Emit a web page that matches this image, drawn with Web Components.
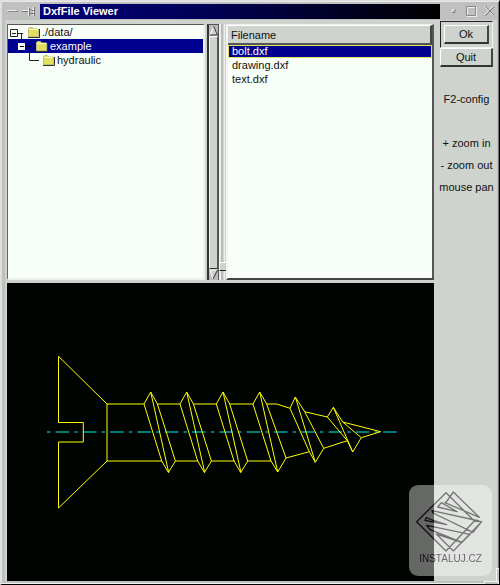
<!DOCTYPE html>
<html lang="en">
<head>
<meta charset="utf-8">
<title>DxfFile Viewer</title>
<style>
html,body{margin:0;background:#000}
body{font:11px/14px "Liberation Sans",Arial,sans-serif;color:#111;--face:#ced3ce;--frame:#c0c0c0;--paper:#f8fff8;--navy:#000090}
</style>
</head>
<body>
<dxf-window>
  <title-bar slot="title">DxfFile Viewer</title-bar>
  <dir-tree slot="tree"></dir-tree>
  <scroll-bar slot="scroll"></scroll-bar>
  <pane-splitter slot="split"></pane-splitter>
  <file-list slot="files"></file-list>
  <bolt-drawing slot="drawing"></bolt-drawing>
  <side-panel slot="side"></side-panel>
  <site-mark slot="mark">INSTALUJ.CZ</site-mark>
</dxf-window>
<script>
const define = (name, html) => customElements.define(name, class extends HTMLElement {
  constructor() {
    super();
    this.attachShadow({mode: 'open'}).innerHTML = html;
  }
});

define('dxf-window', `
<style>
:host{display:flex;flex-direction:column;box-sizing:border-box;min-height:100vh;position:relative;background:var(--frame);
 border:solid;border-width:1px 1px 1px 2px;border-color:#e0e0e0 #000 #000 #dde0dd;box-shadow:inset 0 1px #e8e8e8,inset -1px 0 #777,inset 0 -1px #eee;padding:3px 2px 3px 3px}
.client{display:flex;flex:1;background:var(--face);padding-left:2px}
.main{flex:1;min-width:0;display:flex;flex-direction:column;gap:3px;padding-top:4px}
.panes{display:grid;grid-template-columns:minmax(0,200fr) 12px 7px minmax(0,208fr);height:256px}
.tree{display:grid;padding-right:2px}
.grip{position:absolute;right:0;bottom:0;width:15px;height:16px;cursor:nwse-resize}
.grip::before,.grip::after{content:"";position:absolute;right:0;bottom:0;box-sizing:border-box;background:#c0c0c0;border:1px solid #f4f4f4}
.grip::before{width:3px;height:16px;border-right:0}
.grip::after{width:15px;height:3px;border-bottom:0}
</style>
<slot name="title"></slot>
<div class="client">
  <div class="main">
    <div class="panes"><div class="tree"><slot name="tree"></slot></div><slot name="scroll"></slot><slot name="split"></slot><slot name="files"></slot></div>
    <slot name="drawing"></slot>
  </div>
  <slot name="side"></slot>
</div>
<slot name="mark"></slot>
<div class="grip"></div>`);

define('title-bar', `
<style>
:host{display:flex;align-items:flex-start;height:16px}
.left,.right{display:flex;flex:none}
.left{width:35px}
.right{width:57px;justify-content:flex-end}
h1{flex:1;margin:0;height:15px;padding-left:3px;font:bold 11px/14px "Liberation Sans",Arial,sans-serif;color:#fff;background:linear-gradient(90deg,#000078,#000058 40%,#000)}
button{all:unset;display:block;height:15px;cursor:pointer}
svg{display:block}
</style>
<div class="left">
<button aria-label="Window menu"><svg width="15" height="15"><path d="M2 6.500h10" stroke="#eee"/><path d="M3 7.500h10M12.500 6v2" stroke="#888"/></svg></button>
<button aria-label="Pin window"><svg width="18" height="15" fill="none"><path d="M2 6.500h6M8.500 3v9M9 5.500h4M13.500 3v9" stroke="#eee"/><path d="M2 7.500h6M9.500 4v8M10 9.500h4M10 5l2 1.500h2M14.500 3v9" stroke="#777"/></svg></button>
</div>
<h1><slot></slot></h1>
<div class="right">
<button aria-label="Iconify"><svg width="16" height="15"><path d="M6 8V5.500h3" fill="none" stroke="#eee"/><path d="M9 5v3.500H6" fill="none" stroke="#888"/></svg></button>
<button aria-label="Maximize"><svg width="18" height="15" fill="none"><path d="M5.500 11V3.500h7" stroke="#f0f0f0"/><path d="M4.500 11.500V2.500h9v9z" stroke="#888"/><path d="M14.500 3v9.500H5" stroke="#eee"/></svg></button>
<button aria-label="Close"><svg width="17" height="15"><path d="M4 2l9 9M4 11l9-9" stroke="#eee"/><path d="M5 2l9 9M5 12l9-9" stroke="#777"/></svg></button>
</div>`);

const folder = `<svg class="folder" width="13" height="12" viewBox="0 0 13 12" aria-hidden="true"><path d="M1.500 10.500V2.500l1-1h3l1 1.500h5v7.500z" fill="#e2df61" stroke="#c4bf70"/><path d="M1 11.500h11.500V3" fill="none" stroke="#333"/><path d="M2 3.500h9" stroke="#fafad0"/></svg>`;
define('dir-tree', `
<style>
:host{display:block;box-sizing:border-box;background:var(--paper);border:solid;border-width:1px 2px 2px 1px;border-color:#555 #eef2ee #eef2ee #666}
ul{list-style:none;margin:0;padding:0}
.row{all:unset;display:flex;box-sizing:border-box;width:100%;height:14px;line-height:14px;align-items:flex-start;cursor:pointer}
.lines{flex:none;display:block}
.folder{flex:none;margin:1px 2px 0 0}
.sel{background:var(--navy);color:#fff}
</style>
<ul role="tree" aria-label="Directories">
<li role="treeitem"><button class="row"><svg class="lines" width="19" height="14" fill="none" stroke="#222"><path d="M2.500 4.500h7v7h-7zM4 8.500h4M10 8.500h5M13.500 8v6"/></svg>${folder}./data/</button></li>
<li role="treeitem" aria-selected="true"><button class="row sel"><svg class="lines" width="27" height="14"><path d="M10 4h7v7h-7z" fill="#fff"/><path d="M12 7.500h4M13.500 0v4M17 7.500h6M21.500 7v7" stroke="#000"/></svg>${folder}example</button></li>
<li role="treeitem"><button class="row"><svg class="lines" width="34" height="14"><path d="M21.500 0v7.500H31" fill="none" stroke="#222"/></svg>${folder}hydraulic</button></li>
</ul>`);

define('scroll-bar', `
<style>
:host{display:flex;flex-direction:column;border-left:2px solid #333;border-right:1px solid #555;border-top:1px solid #555;background:#bbb}
button{all:unset;display:block;height:11px;flex:none}
svg{display:block}
.thumb{flex:1;background:var(--face);border:solid;border-width:1px;border-color:#fff #555 #333 #eef2ee}
</style>
<button aria-label="Scroll up"><svg width="9" height="11"><path d="M4.500 1L1 10h7z" fill="#ced3ce"/><path d="M4.500 1L1 10" stroke="#fff"/><path d="M4.500 1L8.500 10H1" fill="none" stroke="#333"/></svg></button>
<div class="thumb" role="scrollbar" aria-valuenow="0" aria-orientation="vertical"></div>
<button aria-label="Scroll down"><svg width="9" height="11"><path d="M1 1h7L4 10z" fill="#ced3ce"/><path d="M8 1H1l3 9" fill="none" stroke="#fff"/><path d="M8.500 1L4 10" stroke="#333"/></svg></button>`);

define('pane-splitter', `
<style>
:host{display:flex;flex-direction:column;justify-content:flex-end;background:linear-gradient(90deg,#eee 0 2px,#bbb 2px 4px,#d4d8d4 4px 5px,#eee 5px 6px,#ced3ce 6px);cursor:col-resize}
div{height:7px;margin-bottom:9px;background:var(--face);border:solid;border-width:1px 0 1px 1px;border-color:#fff #333 #222 #fff}
</style>
<div role="separator" aria-orientation="vertical"></div>`);

define('file-list', `
<style>
:host{display:block;box-sizing:border-box;background:var(--paper);border:solid;border-width:1px 2px 2px 2px;border-color:#eee #555 #444 #f4f4f4}
table{width:100%;border-collapse:separate;border-spacing:0}
th{height:17px;padding:0 0 0 3px;text-align:left;font-weight:normal;background:var(--face);border:solid;border-width:1px 2px 2px 0;border-color:#fff #444 #555 #fff}
td{padding:0 0 0 4px;height:14px;line-height:14px}
tbody tr:first-child td{height:11px;line-height:11px;padding-left:3px;background:var(--navy);color:#fff;border:1px solid #dede60}
</style>
<table><thead><tr><th scope="col">Filename</th></tr></thead>
<tbody><tr aria-selected="true"><td>bolt.dxf</td></tr><tr><td>drawing.dxf</td></tr><tr><td>text.dxf</td></tr></tbody></table>`);

define('side-panel', `
<style>
:host{display:flex;flex:none;flex-direction:column;width:63px;box-sizing:border-box;padding:1px 4px 0 6px;text-align:center;white-space:nowrap}
button{display:block;width:100%;height:19px;box-sizing:border-box;padding:0;font:inherit;color:inherit;background:var(--face);border:solid;border-width:1px 2px 2px 1px;border-color:#fff #444 #333 #fff;border-radius:0}
.default{border:1px solid;border-color:#222 #f4f4f4 #f4f4f4 #222;padding:3px}
ul{list-style:none;margin:21px -4px 0;padding:0;line-height:22px}
li:first-child{margin-bottom:22px}
</style>
<div class="default"><button>Ok</button></div>
<button>Quit</button>
<ul><li>F2-config</li><li>+ zoom in</li><li>- zoom out</li><li>mouse pan</li></ul>`);

const thread = x => `M${x-6.7} 404L${x} 392l6.700 12l18 57l-7 11.500l-6.700 -11.500zM${x} 392l18 80.500`;
define('bolt-drawing', `
<style>
:host{display:block;background:#000400}
svg{display:block;width:100%;height:auto}
</style>
<svg viewBox="7 283 427 298" fill="none" role="img" aria-label="Drawing of a bolt">
<path d="M47 432H397" stroke="#00f5f5" stroke-dasharray="3.300 5.300 13.500 5.200"/>
<path stroke="#ff0" d="M58.500 356.300V422.500H83.300V442H58.500V508L107 461V404L58.500 356.300
M107 404H144M157.400 404H180M193.400 404H216.300M229.700 404H253M266.500 404H276.700L290 408.300
M107 461H162M175.300 461H198M211.300 461H234.500M247.500 461H271M286 458L309.300 451.700
${thread(150.7)}${thread(186.7)}${thread(223)}
M253 404L259.700 392L266.700 404L286 458L277.700 472L271 461L253 404M259.700 392L277.700 472
M290 408.300L295.300 397L304.700 411.700L323.700 448.300L315.300 462.300L309.300 451.700L290 408.300M295.300 397L315.300 462.300
M304.700 411.700L327.300 417L333.300 407.300L342.700 422L361.300 437.700L352.700 452L347.300 440.700L327.300 417M333.300 407.300L352.700 452
M323.700 448.300L347.300 440.700M342.700 422L380.700 431.700L361.300 437.700"/>
</svg>`);

define('site-mark', `
<style>
:host{position:absolute;right:7px;bottom:8px;width:83px;height:91px;border-radius:9px;background:rgba(255,255,255,.4);
 display:flex;flex-direction:column;align-items:center;font:10px/14px "Liberation Sans",Arial,sans-serif}
svg{display:block;flex:none}
span{background:linear-gradient(90deg,rgba(0,0,0,.85) 20%,rgba(0,0,0,.55) 26%);-webkit-background-clip:text;background-clip:text;color:transparent}
</style>
<svg width="83" height="67" viewBox="27 45 249 201" fill="none" stroke-width="4" stroke-linejoin="round" aria-hidden="true">
<defs><linearGradient id="g" gradientUnits="userSpaceOnUse" x1="99" y1="0" x2="103" y2="0"><stop stop-color="#000" stop-opacity=".85"/><stop offset="1" stop-color="#000" stop-opacity=".48"/></linearGradient></defs>
<path stroke="url(#g)" d="M160 243L245 155L223 153L138 68L50 155L138 243L223 153M138 97L160 66L238 142L133 97M124 98L171 125L113 111zM245 155L219 187L99 129L96 122L238 153M79 143L96 150L140 164L75 151zM80 166L210 193L186 217L89 178zM160 243L109 192L182 216"/>
</svg>
<span><slot></slot></span>`);
</script>
</body>
</html>
